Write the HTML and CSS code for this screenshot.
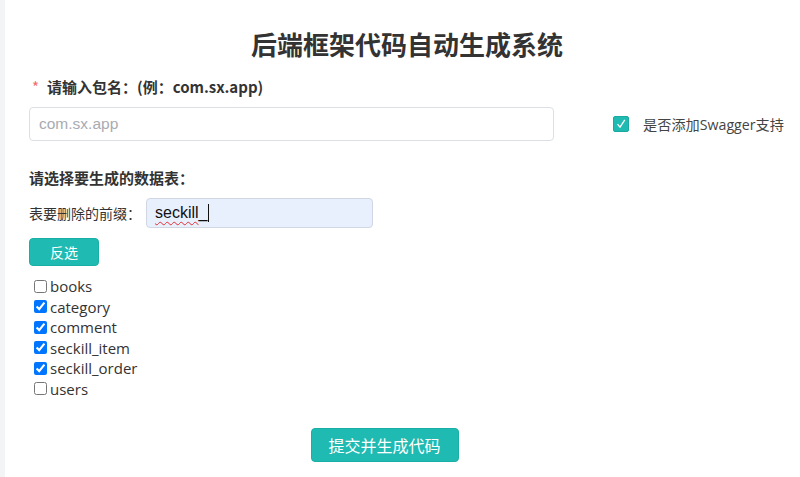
FILE: index.html
```html
<!DOCTYPE html>
<html lang="zh-CN">
    <head>
        <meta charset="UTF-8" />
        <meta name="viewport" content="width=device-width, initial-scale=1.0" />
        <title>后端框架代码自动生成系统</title>
        <link rel="stylesheet" href="styles.css">
    </head>
    <body>
        <div id="sidebar"></div>
        <div id="main">
            <h1>后端框架代码自动生成系统</h1>
            <form id="genForm">
                <label class="field-label" for="pkg"><span class="required">*</span>请输入包名：(例：com.sx.app)</label>
                <div class="pkg-row">
                    <input type="text" id="pkg" class="pkg-input" placeholder="com.sx.app" />
                    <label class="swagger">
                        <span class="swagger-box">
                            <svg width="12" height="12" viewBox="0 0 12 12"><path d="M2.5 6.2 L5 9.2 L9.8 1.8" fill="none" stroke="#fff" stroke-width="1.3"/></svg>
                        </span>
                        是否添加Swagger支持
                    </label>
                </div>

                <div class="section-title">请选择要生成的数据表：</div>
                <div class="prefix-row">
                    <label for="prefix">表要删除的前缀：</label>
                    <div class="prefix-input" id="prefix"><span class="typo">seckill</span>_<span class="caret"></span></div>
                </div>
                <button type="button" class="btn btn-small">反选</button>

                <ul class="tables">
                    <li><label><input type="checkbox" />books</label></li>
                    <li><label><input type="checkbox" checked />category</label></li>
                    <li><label><input type="checkbox" checked />comment</label></li>
                    <li><label><input type="checkbox" checked />seckill_item</label></li>
                    <li><label><input type="checkbox" checked />seckill_order</label></li>
                    <li><label><input type="checkbox" />users</label></li>
                </ul>

                <div class="submit-row">
                    <button type="button" class="btn btn-submit">提交并生成代码</button>
                </div>
            </form>
        </div>
    </body>
</html>
```

FILE: styles.css
```css
body {
    font-family: "Open Sans", "Noto Sans CJK SC", sans-serif;
    background-color: #fff;
    margin: 0;
    padding: 0;
    display: flex;
    height: 100vh;
    overflow: hidden;
    color: #333;
}

#sidebar {
    width: 5px;
    background-color: #f3f4f6;
    flex-shrink: 0;
}

#main {
    flex: 1;
    padding: 0 15px 0 24px;
}

h1 {
    text-align: center;
    font-size: 26px;
    font-weight: bold;
    color: #333;
    margin: 26px 0 0 0;
    line-height: 36px;
    font-family: "Noto Sans CJK SC", sans-serif;
}

.field-label {
    display: block;
    font-size: 15px;
    font-weight: bold;
    margin-top: 14px;
    line-height: 22px;
    font-family: "Noto Sans CJK SC", sans-serif;
}

.required {
    color: #f56c6c;
    margin: 0 8px 0 3px;
    font-weight: normal;
}

.pkg-row {
    display: flex;
    align-items: center;
    margin-top: 9px;
}

.pkg-input {
    width: 525px;
    height: 34px;
    box-sizing: border-box;
    border: 1px solid #dcdfe6;
    border-radius: 4px;
    padding: 0 9px;
    font-family: "Liberation Sans", Arial, sans-serif;
    font-size: 15.5px;
    color: #333;
    outline: none;
}

.pkg-input::placeholder {
    color: #a8abb2;
}

.swagger {
    display: flex;
    align-items: center;
    margin-left: 59px;
    font-size: 14.2px;
    color: #444;
    white-space: nowrap;
}

.swagger-box {
    width: 16px;
    height: 16px;
    background-color: #1fbab1;
    border: 1px solid #1aa9a1;
    box-sizing: border-box;
    border-radius: 2px;
    display: flex;
    align-items: center;
    justify-content: center;
    margin-right: 14px;
}

.section-title {
    font-size: 15px;
    font-weight: bold;
    margin-top: 26px;
    line-height: 22px;
    font-family: "Noto Sans CJK SC", sans-serif;
}

.prefix-row {
    display: flex;
    align-items: center;
    margin-top: 9px;
    font-size: 14px;
}

.prefix-row label {
    width: 117px;
}

.prefix-input {
    width: 227px;
    height: 30px;
    box-sizing: border-box;
    background-color: #e8f0fe;
    border: 1px solid #d0d7e2;
    border-radius: 4px;
    padding: 0 8px;
    font-family: "Liberation Sans", Arial, sans-serif;
    font-size: 16px;
    color: #111;
    display: flex;
    align-items: center;
}

.typo {
    text-decoration: underline wavy #e03030;
    text-decoration-thickness: 1px;
    text-underline-offset: 3px;
}

.caret {
    display: inline-block;
    width: 1px;
    height: 18px;
    background-color: #111;
    margin-left: 1px;
}

.btn {
    background-color: #1fbab1;
    color: #fff;
    border: 1px solid #1aafa6;
    border-radius: 4px;
    cursor: pointer;
    font-family: "Noto Sans CJK SC", sans-serif;
}

.btn:hover {
    background-color: #35c6bd;
}

.btn-small {
    margin-top: 10px;
    width: 70px;
    height: 28px;
    font-size: 14px;
    padding: 0;
}

.tables {
    list-style: none;
    margin: 10px 0 0 0;
    padding: 0;
    font-size: 15px;
}

.tables li {
    height: 20.6px;
    line-height: 20px;
}

.tables label {
    display: flex;
    align-items: center;
}

.tables input {
    width: 13px;
    height: 13px;
    margin: 0 3px 0 5px;
}

.submit-row {
    display: flex;
    justify-content: center;
    margin-top: 28px;
    padding-right: 45px;
}

.btn-submit {
    width: 148px;
    height: 34px;
    font-size: 16px;
}
```
